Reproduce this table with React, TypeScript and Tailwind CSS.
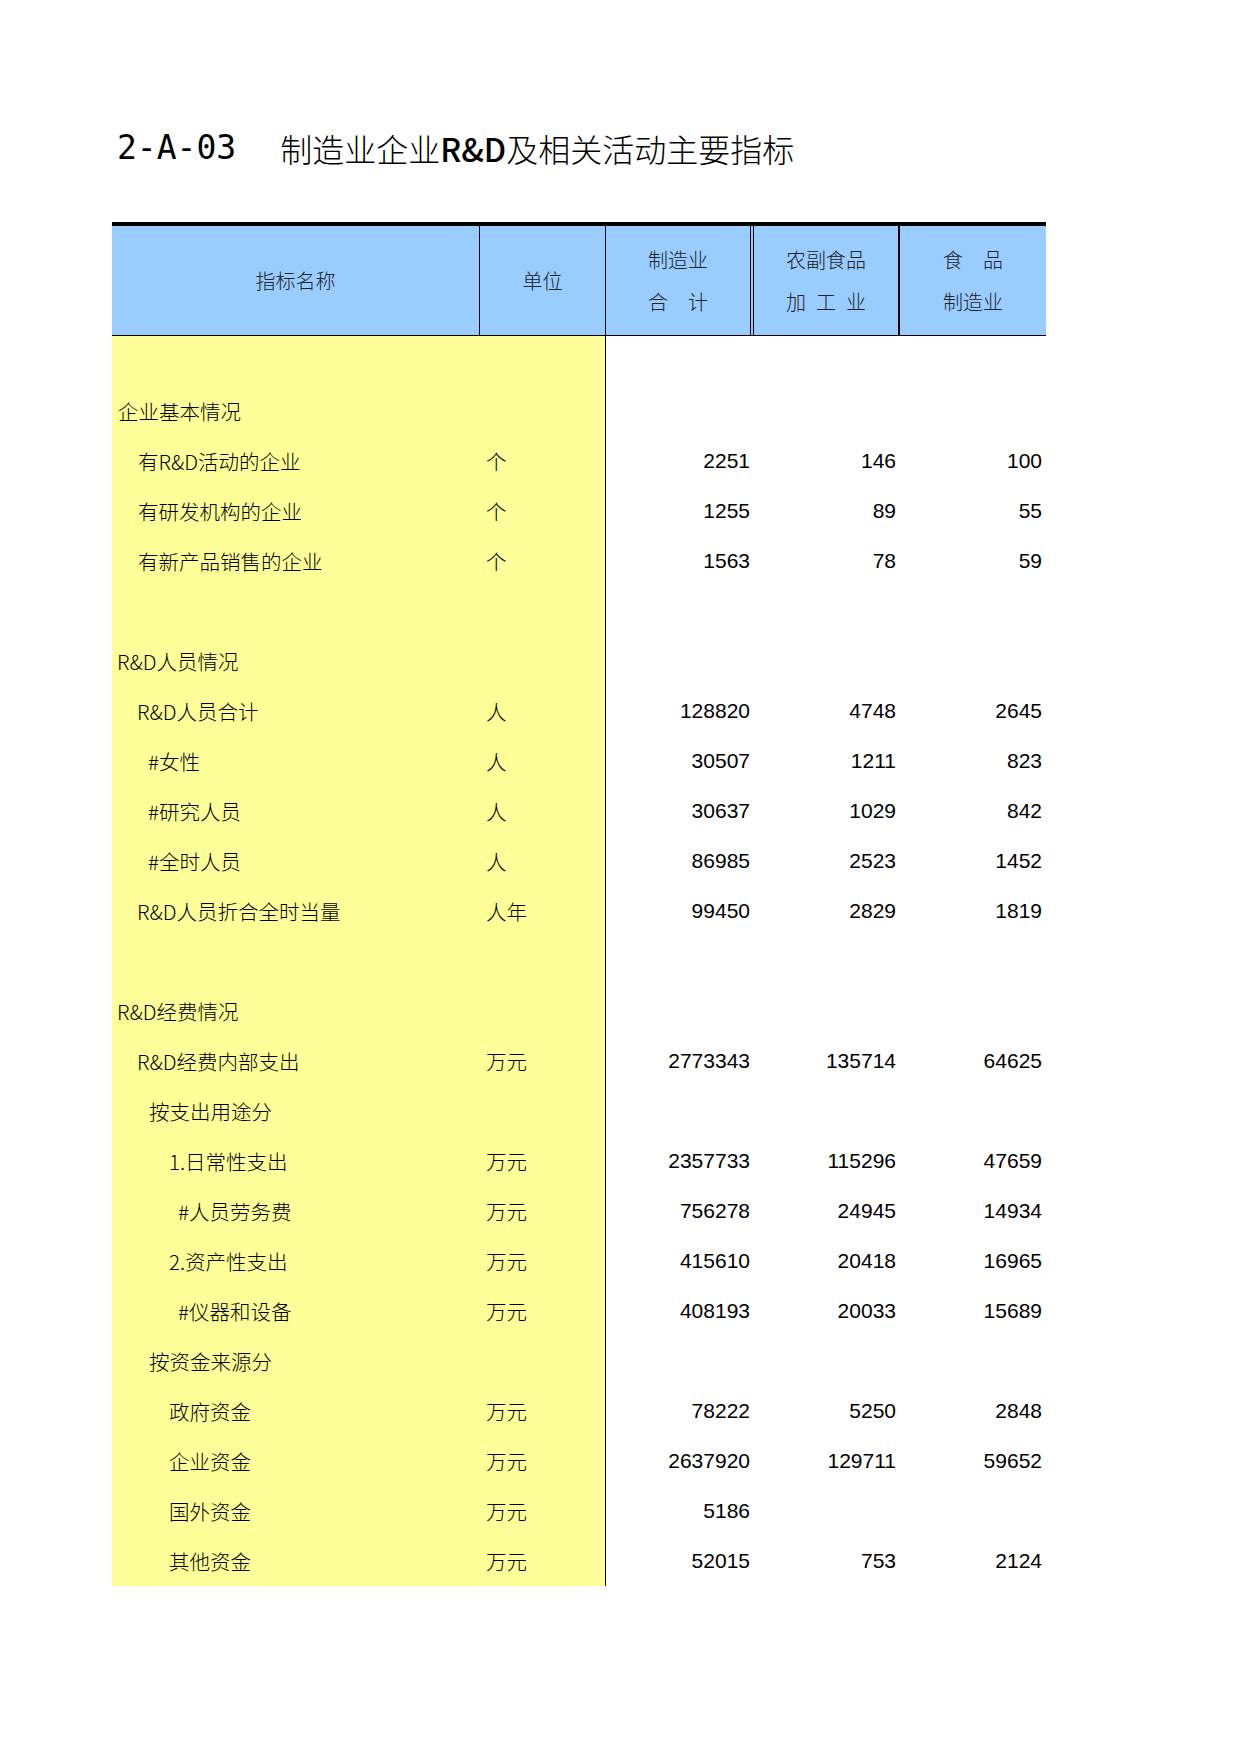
type Row = {
  label?: string
  indent?: number
  unit?: string
  values?: string[]
}

const rows: Row[] = [
  {},
  { label: '企业基本情况', indent: 6 },
  { label: '有R&D活动的企业', indent: 26, unit: '个', values: ['2251', '146', '100'] },
  { label: '有研发机构的企业', indent: 26, unit: '个', values: ['1255', '89', '55'] },
  { label: '有新产品销售的企业', indent: 26, unit: '个', values: ['1563', '78', '59'] },
  {},
  { label: 'R&D人员情况', indent: 5 },
  { label: 'R&D人员合计', indent: 25, unit: '人', values: ['128820', '4748', '2645'] },
  { label: '#女性', indent: 36, unit: '人', values: ['30507', '1211', '823'] },
  { label: '#研究人员', indent: 36, unit: '人', values: ['30637', '1029', '842'] },
  { label: '#全时人员', indent: 36, unit: '人', values: ['86985', '2523', '1452'] },
  { label: 'R&D人员折合全时当量', indent: 25, unit: '人年', values: ['99450', '2829', '1819'] },
  {},
  { label: 'R&D经费情况', indent: 5 },
  { label: 'R&D经费内部支出', indent: 25, unit: '万元', values: ['2773343', '135714', '64625'] },
  { label: '按支出用途分', indent: 37 },
  { label: '1.日常性支出', indent: 57, unit: '万元', values: ['2357733', '115296', '47659'] },
  { label: '#人员劳务费', indent: 66, unit: '万元', values: ['756278', '24945', '14934'] },
  { label: '2.资产性支出', indent: 57, unit: '万元', values: ['415610', '20418', '16965'] },
  { label: '#仪器和设备', indent: 66, unit: '万元', values: ['408193', '20033', '15689'] },
  { label: '按资金来源分', indent: 37 },
  { label: '政府资金', indent: 57, unit: '万元', values: ['78222', '5250', '2848'] },
  { label: '企业资金', indent: 57, unit: '万元', values: ['2637920', '129711', '59652'] },
  { label: '国外资金', indent: 57, unit: '万元', values: ['5186', '', ''] },
  { label: '其他资金', indent: 57, unit: '万元', values: ['52015', '753', '2124'] },
]

const cjk = "font-['Noto_Sans_CJK_SC',sans-serif] font-light"
const grid = 'grid grid-cols-[368px_126px_148px_146px_146px]'

export default function App() {
  return (
    <div className="min-h-[1754px] w-[1240px] bg-white pl-[112px] pt-[123px] text-black">
      {/* Title */}
      <div className="flex h-[50px] items-center pl-[5px]">
        <span className="font-['DejaVu_Sans_Mono',monospace] text-[33px]">2-A-03</span>
        <span className={`ml-[44px] text-[32px] ${cjk}`}>
          制造业企业<span className="font-medium">R&amp;D</span>及相关活动主要指标
        </span>
      </div>

      <div className="mt-[49px] w-[934px] border-t-4 border-black">
        {/* Header */}
        <div className={`${grid} h-[110px] border-b border-black bg-[#99ccff] text-[20px] text-[#222] ${cjk}`}>
          <div className="flex items-center justify-center border-r border-black">指标名称</div>
          <div className="flex items-center justify-center border-r border-black">单位</div>
          <div className="flex flex-col items-center justify-center border-r-4 border-double border-black leading-[42px]">
            <div>制造业</div>
            <div className="flex w-[60px] justify-between">
              <span>合</span>
              <span>计</span>
            </div>
          </div>
          <div className="flex flex-col items-center justify-center border-r-2 border-black leading-[42px]">
            <div>农副食品</div>
            <div className="flex w-[80px] justify-between">
              <span>加</span>
              <span>工</span>
              <span>业</span>
            </div>
          </div>
          <div className="flex flex-col items-center justify-center leading-[42px]">
            <div className="flex w-[60px] justify-between">
              <span>食</span>
              <span>品</span>
            </div>
            <div>制造业</div>
          </div>
        </div>

        {/* Body */}
        {rows.map((row, i) => (
          <div key={i} className={`${grid} h-[50px]`}>
            <div
              className={`flex items-center bg-[#ffff99] text-[20.5px] ${cjk}`}
              style={{ paddingLeft: row.indent ?? 0 }}
            >
              {row.label}
            </div>
            <div className={`flex items-center border-r border-black bg-[#ffff99] pl-[6px] text-[20.5px] ${cjk}`}>
              {row.unit}
            </div>
            {[0, 1, 2].map((j) => (
              <div
                key={j}
                className="flex items-center justify-end pr-[4px] font-['Liberation_Sans',Arial,sans-serif] text-[21px]"
              >
                {row.values?.[j]}
              </div>
            ))}
          </div>
        ))}
      </div>
    </div>
  )
}
